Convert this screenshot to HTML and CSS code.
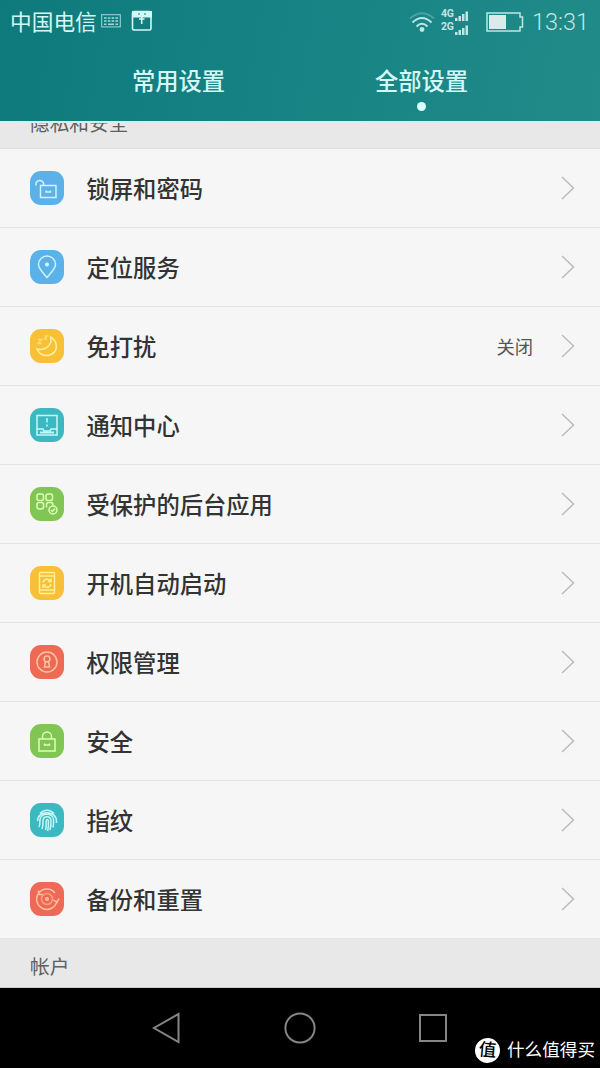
FILE: index.html
```
<!DOCTYPE html>
<html lang="zh-CN">
<head>
    <meta charset="UTF-8">
    <meta name="viewport" content="width=device-width, initial-scale=1.0">
    <title>全部设置</title>
    <link rel="stylesheet" href="styles.css">
</head>
<body>
    <div class="screen">
        <header class="header">
            <div class="status-bar">
                <span class="carrier">中国电信</span>
                <svg class="keyboard-icon" width="20" height="14" viewBox="0 0 20 14">
                    <rect x="0.7" y="0.7" width="18.6" height="12.2" fill="none" stroke="currentColor"/>
                    <path d="M3 4h14M3 7h14" stroke="currentColor" stroke-width="1.6" stroke-dasharray="2.6 1.2"/>
                    <path d="M3 10.2h2.5M7 10.2h6M14.5 10.2H17" stroke="currentColor" stroke-width="1.4"/>
                </svg>
                <svg class="box-icon" width="22" height="22" viewBox="0 0 22 22">
                    <rect x="1.5" y="1.5" width="18.5" height="18.5" rx="1.5" fill="none" stroke="currentColor" stroke-width="1.6"/>
                    <path d="M1 1h20v6.5H1z" fill="currentColor"/>
                    <path d="M7 4h2M13 4h2" stroke="#168080" stroke-width="1.2"/>
                    <path d="M10.7 7v7M8 9h5.5" stroke="currentColor" stroke-width="1.6"/>
                </svg>
                <div class="status-right">
                    <svg class="wifi-icon" width="26" height="22" viewBox="0 0 26 22">
                        <g fill="none" stroke="currentColor" stroke-width="2">
                            <path d="M1 7.5Q13-3 25 7.5" opacity="0.3"/>
                            <path d="M3.5 11.5Q13 2.5 22.5 11.5"/>
                            <path d="M7.5 15.5Q13 10 18.5 15.5"/>
                        </g>
                        <circle cx="13" cy="18.5" r="2.4" fill="currentColor"/>
                    </svg>
                    <div class="signals">
                        <div class="signal">
                            <span>4G</span>
                            <svg width="14" height="10" viewBox="0 0 14 10"><path d="M0 7h2.500v3H0zM3.500 5H6v5H3.500zM7 3h2.500v7H7zM10.500 0.500H13V10h-2.500z" fill="currentColor"/></svg>
                        </div>
                        <div class="signal">
                            <span>2G</span>
                            <svg width="14" height="10" viewBox="0 0 14 10"><path d="M0 7h2.500v3H0zM3.500 5H6v5H3.500zM7 3h2.500v7H7zM10.500 0.500H13V10h-2.500z" fill="currentColor"/></svg>
                        </div>
                    </div>
                    <svg class="battery-icon" width="38" height="20" viewBox="0 0 38 20">
                        <path d="M1 1h33v4h2.500v10H34v4H1z" fill="none" stroke="currentColor" stroke-width="1.5"/>
                        <rect x="3" y="3" width="17" height="14" fill="#dcebea"/>
                    </svg>
                    <span class="clock">13:31</span>
                </div>
            </div>
            <nav class="tabs">
                <div class="tab">常用设置</div>
                <div class="tab active">全部设置</div>
            </nav>
        </header>

        <main class="content">
            <div class="section-title clipped"><span>隐私和安全</span></div>
            <ul class="settings">
                <li class="row">
                    <svg class="icon blue" viewBox="0 0 34 34">
                        <rect x="10.5" y="14.5" width="15.5" height="12"/>
                        <path d="M13.5 14.5V12a4 4 0 0 0-7.500 0v2.500M16 19.500V21h4.500v-1.500"/>
                    </svg>
                    <span class="label">锁屏和密码</span>
                    <svg class="arrow" viewBox="0 0 14 24"><path d="M1 1l11.500 11L1 23"/></svg>
                </li>
                <li class="row">
                    <svg class="icon blue" viewBox="0 0 34 34">
                        <path d="M17 27.500c-3-4-8.500-8.500-8.500-13a8.500 8.500 0 0 1 17 0c0 4.500-5.500 9-8.500 13z"/>
                        <circle cx="17" cy="14.500" r="2" fill="#d9f4ff" stroke="none"/>
                    </svg>
                    <span class="label">定位服务</span>
                    <svg class="arrow" viewBox="0 0 14 24"><path d="M1 1l11.500 11L1 23"/></svg>
                </li>
                <li class="row">
                    <svg class="icon yellow" viewBox="0 0 34 34">
                        <path d="M20.500 8c7 4 8 13 1.500 17-5.500 3.300-12.500 1-15-5C14 22 23 17 20.500 8z"/>
                        <path d="M8 10.500h3.500l-3.500 4h3.500M14.500 7H17l-2.500 3H17" opacity="0.600"/>
                    </svg>
                    <span class="label">免打扰</span>
                    <span class="value">关闭</span>
                    <svg class="arrow" viewBox="0 0 14 24"><path d="M1 1l11.500 11L1 23"/></svg>
                </li>
                <li class="row">
                    <svg class="icon teal" viewBox="0 0 34 34">
                        <rect x="7" y="7.500" width="20" height="19.500"/>
                        <path d="M7 21h6l1 2h6l1-2h6M17 10v4.500M17 16.500v2"/>
                        <path d="M10 24.500h14" stroke-width="2"/>
                    </svg>
                    <span class="label">通知中心</span>
                    <svg class="arrow" viewBox="0 0 14 24"><path d="M1 1l11.500 11L1 23"/></svg>
                </li>
                <li class="row">
                    <svg class="icon green" viewBox="0 0 34 34">
                        <rect x="7" y="7" width="6.500" height="6.500" rx="2"/>
                        <rect x="16" y="7" width="6.500" height="6.500" rx="2"/>
                        <rect x="7" y="15.500" width="6.500" height="6.500" rx="2"/>
                        <path d="M16.500 20.500v-3q0-2 2-2H21q2 0 2 2.500"/>
                        <circle cx="23" cy="23" r="4"/>
                        <path d="M21 23l1.500 1.500 2.500-3"/>
                    </svg>
                    <span class="label">受保护的后台应用</span>
                    <svg class="arrow" viewBox="0 0 14 24"><path d="M1 1l11.500 11L1 23"/></svg>
                </li>
                <li class="row">
                    <svg class="icon yellow" viewBox="0 0 34 34">
                        <rect x="9.500" y="6.500" width="15" height="21" rx="1"/>
                        <path d="M9.500 10h15M9.500 24h15M13 16.500a4.300 4.300 0 0 1 8-1M21 12.500v3h-3M21 18a4.300 4.300 0 0 1-8 1M13 22v-3h3"/>
                    </svg>
                    <span class="label">开机自动启动</span>
                    <svg class="arrow" viewBox="0 0 14 24"><path d="M1 1l11.500 11L1 23"/></svg>
                </li>
                <li class="row">
                    <svg class="icon red" viewBox="0 0 34 34">
                        <circle cx="17" cy="17" r="10"/>
                        <circle cx="17" cy="14" r="2.900"/>
                        <path d="M15.500 16.500L14.500 22h5l-1-5.500"/>
                    </svg>
                    <span class="label">权限管理</span>
                    <svg class="arrow" viewBox="0 0 14 24"><path d="M1 1l11.500 11L1 23"/></svg>
                </li>
                <li class="row">
                    <svg class="icon green" viewBox="0 0 34 34">
                        <rect x="9" y="15" width="16" height="12"/>
                        <path d="M12.500 15v-2.500a4.500 4.500 0 0 1 9 0V15M14.500 19.500V21h5v-1.500"/>
                    </svg>
                    <span class="label">安全</span>
                    <svg class="arrow" viewBox="0 0 14 24"><path d="M1 1l11.500 11L1 23"/></svg>
                </li>
                <li class="row">
                    <svg class="icon teal" viewBox="0 0 34 34">
                        <path d="M10 10.500c4-4.500 10-4.500 14 0M7.500 18c0-11 19-11 19 0v2M9 24c1.500-3 .5-5 1-7.500 1-7 13-7 13.500 0 .2 3 .2 5-.5 8M12 26c1.500-4 .7-6 1-8.500.5-5 7.500-5 8 0 .2 4 0 6-1 9.500M15.500 27c1-4 .5-6 .7-9 .3-2 2-2 2.200 0 .2 3 0 6-.7 10"/>
                    </svg>
                    <span class="label">指纹</span>
                    <svg class="arrow" viewBox="0 0 14 24"><path d="M1 1l11.500 11L1 23"/></svg>
                </li>
                <li class="row">
                    <svg class="icon red" viewBox="0 0 34 34">
                        <path d="M25 11a10.200 10.200 0 1 0 2 7.500M29 16.500l-2 4-3.500-2.500M8.500 8.500v4h4"/>
                        <circle cx="17" cy="17" r="5.500" opacity="0.600"/>
                        <circle cx="17" cy="17" r="1.300"/>
                    </svg>
                    <span class="label">备份和重置</span>
                    <svg class="arrow" viewBox="0 0 14 24"><path d="M1 1l11.500 11L1 23"/></svg>
                </li>
            </ul>
            <div class="section-title account"><span>帐户</span></div>
        </main>

        <footer class="nav-bar">
            <svg class="nav-icon" viewBox="0 0 32 32"><path d="M27.500 2v28L3 16z"/></svg>
            <svg class="nav-icon" viewBox="0 0 32 32"><circle cx="16" cy="16" r="14.600"/></svg>
            <svg class="nav-icon" viewBox="0 0 32 32"><rect x="3" y="3" width="26" height="26"/></svg>
            <div class="watermark">
                <span class="badge">值</span>
                <span>什么值得买</span>
            </div>
        </footer>
    </div>
</body>
</html>
```

FILE: styles.css
```
* {
    box-sizing: border-box;
}
body {
    margin: 0;
    font-family: Roboto, "Noto Sans CJK SC", sans-serif;
    background-color: #000;
    color: #333;
}
.screen {
    width: 600px;
    height: 1068px;
    display: flex;
    flex-direction: column;
    overflow: hidden;
}

/* header */
.header {
    height: 121px;
    flex-shrink: 0;
    background: linear-gradient(100deg, #0f7a7b 0%, #178384 50%, #208b88 100%);
    color: #d3f8f7;
}
.status-bar {
    height: 43px;
    padding: 0 12px 0 10px;
    display: flex;
    align-items: center;
}
.carrier {
    font-size: 21.7px;
    line-height: 43px;
    padding-top: 1px;
}
.keyboard-icon {
    margin-left: 4px;
    margin-bottom: 2px;
    opacity: 0.75;
}
.box-icon {
    margin-left: 10px;
    margin-bottom: 1px;
}
.status-right {
    margin-left: auto;
    display: flex;
    align-items: center;
    color: #bfe6e4;
}
.wifi-icon {
    margin-top: 1px;
}
.signals {
    margin-left: 6px;
    margin-right: 17px;
    margin-bottom: 4px;
}
.signal {
    display: flex;
    align-items: flex-end;
    height: 13px;
}
.signal:first-child svg {
    margin-bottom: -1px;
}
.signal:last-child svg {
    margin-bottom: -2px;
}
.signal span {
    width: 14px;
    font-size: 10.5px;
    line-height: 14px;
    font-weight: bold;
    letter-spacing: -0.3px;
    align-self: flex-start;
}
.clock {
    width: 56px;
    margin-left: 8px;
    font-size: 23.5px;
    line-height: 43px;
    font-weight: 300;
    white-space: nowrap;
    padding-top: 1px;
}
.tabs {
    display: grid;
    grid-template-columns: 243px 243px;
    justify-content: center;
}
.tab {
    text-align: center;
    font-size: 23.3px;
    font-weight: 500;
    line-height: 34px;
    padding-top: 22px;
    height: 78px;
}
.tab.active::after {
    content: "";
    display: block;
    width: 9px;
    height: 9px;
    margin: 3px auto 0;
    border-radius: 50%;
    background-color: #dcffff;
}

/* list */
.content {
    flex: 1;
    background-color: #f6f6f6;
}
.section-title {
    background-color: #e8e8e8;
    padding-left: 30px;
    font-size: 19.7px;
    color: #606060;
    overflow: hidden;
}
.section-title.clipped {
    height: 28px;
    border-top: 2px solid #d5eeee;
    border-bottom: 1px solid #e0e0e0;
}
.clipped span {
    display: block;
    line-height: 28px;
    margin-top: -12px;
}
.section-title.account {
    height: 49px;
    line-height: 57px;
    border-bottom: 1px solid #ccc;
}
.settings {
    list-style: none;
    margin: 0;
    padding: 0;
}
.row {
    height: 79px;
    padding: 0 25px 0 29.5px;
    display: flex;
    align-items: center;
    border-bottom: 1px solid #e4e4e4;
}
.icon {
    width: 34px;
    height: 34px;
    border-radius: 11px;
    fill: none;
    stroke: #cdf4ff;
    stroke-width: 1.5;
}
.icon.blue {
    background-color: #5bb1e8;
}
.icon.yellow {
    background-color: #f8c037;
    stroke: #fff09a;
}
.icon.teal {
    background-color: #3cb9c0;
    stroke: #c2fafa;
}
.icon.green {
    background-color: #81c654;
    stroke: #dcffb5;
}
.icon.red {
    background-color: #ef6a56;
    stroke: #ffc3a0;
}
.label {
    flex: 1;
    margin-left: 23px;
    padding-top: 3px;
    font-size: 23.3px;
    font-weight: 500;
    line-height: 34px;
}
.value {
    margin-right: 28px;
    font-size: 18.3px;
    color: #555;
}
.arrow {
    width: 14px;
    height: 24px;
    fill: none;
    stroke: #bbb;
    stroke-width: 1.5;
}

/* navigation */
.nav-bar {
    height: 80px;
    flex-shrink: 0;
    display: flex;
    justify-content: center;
    align-items: center;
    gap: 101px;
    position: relative;
    background-color: #000;
}
.nav-icon {
    width: 32px;
    height: 32px;
    fill: none;
    stroke: #858585;
    stroke-width: 2;
}
.watermark {
    position: absolute;
    right: 5px;
    bottom: 5px;
    display: flex;
    align-items: center;
    gap: 7px;
    color: #fff;
    font-size: 17.6px;
    line-height: 25px;
}
.badge {
    width: 25px;
    height: 25px;
    border-radius: 50%;
    background-color: #fff;
    color: #000;
    font-weight: 500;
    text-align: center;
    line-height: 24px;
    transform: rotate(5deg);
}
```
